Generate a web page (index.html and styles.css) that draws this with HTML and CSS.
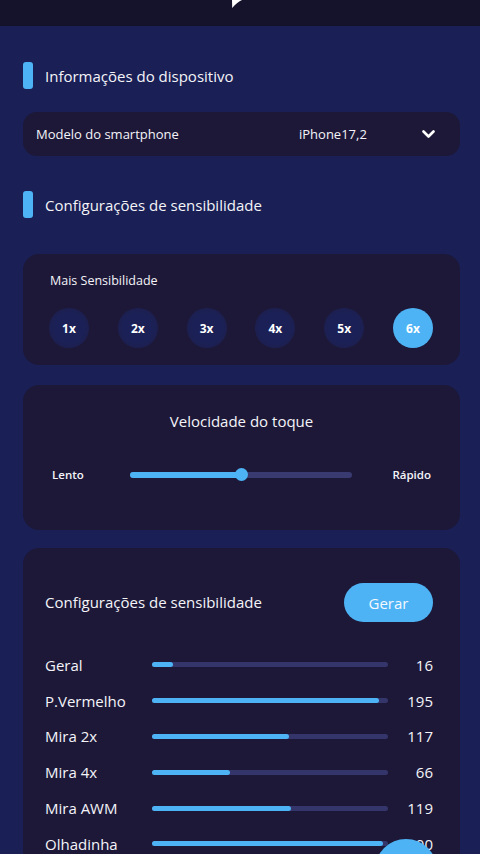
FILE: index.html
```html
<!DOCTYPE html>
<html lang="pt">
<head>
    <meta charset="UTF-8">
    <meta name="viewport" content="width=device-width, initial-scale=1.0">
    <title>Sensibilidade</title>
    <link rel="stylesheet" href="styles.css">
</head>
<body>
    <header class="top-bar">
        <svg class="logo" width="12" height="8" viewBox="0 0 12 8">
            <path d="M1 0 H11 C8 1.5 4.5 4 1.2 8 Z" fill="#fff"/>
        </svg>
    </header>
    <main>
        <div class="section-title">
            <span class="accent"></span>
            <h2>Informações do dispositivo</h2>
        </div>
        <div class="card device-select">
            <span class="device-label">Modelo do smartphone</span>
            <span class="device-value">iPhone17,2</span>
            <svg class="chevron" width="13" height="9" viewBox="0 0 13 9">
                <polyline points="1.5,1.5 6.5,6.5 11.5,1.5" fill="none" stroke="#fff" stroke-width="2.6" stroke-linecap="round" stroke-linejoin="round"/>
            </svg>
        </div>

        <div class="section-title second">
            <span class="accent"></span>
            <h2>Configurações de sensibilidade</h2>
        </div>
        <div class="card multiplier-card">
            <p class="card-label">Mais Sensibilidade</p>
            <div class="multipliers">
                <button class="mult">1x</button>
                <button class="mult">2x</button>
                <button class="mult">3x</button>
                <button class="mult">4x</button>
                <button class="mult">5x</button>
                <button class="mult active">6x</button>
            </div>
        </div>

        <div class="card speed-card">
            <h3 class="speed-title">Velocidade do toque</h3>
            <div class="speed-row">
                <span class="speed-label">Lento</span>
                <div class="slider">
                    <div class="slider-fill" style="width: 50%"></div>
                    <div class="slider-thumb" style="left: 50%"></div>
                </div>
                <span class="speed-label right">Rápido</span>
            </div>
        </div>

        <div class="card result-card">
            <div class="result-head">
                <h3>Configurações de sensibilidade</h3>
                <button class="btn-gerar">Gerar</button>
            </div>
            <div class="result-list">
                <div class="result-row">
                    <span class="result-name">Geral</span>
                    <div class="bar"><div class="bar-fill" style="width: 9%"></div></div>
                    <span class="result-value">16</span>
                </div>
                <div class="result-row">
                    <span class="result-name">P.Vermelho</span>
                    <div class="bar"><div class="bar-fill" style="width: 96%"></div></div>
                    <span class="result-value">195</span>
                </div>
                <div class="result-row">
                    <span class="result-name">Mira 2x</span>
                    <div class="bar"><div class="bar-fill" style="width: 58%"></div></div>
                    <span class="result-value">117</span>
                </div>
                <div class="result-row">
                    <span class="result-name">Mira 4x</span>
                    <div class="bar"><div class="bar-fill" style="width: 33%"></div></div>
                    <span class="result-value">66</span>
                </div>
                <div class="result-row">
                    <span class="result-name">Mira AWM</span>
                    <div class="bar"><div class="bar-fill" style="width: 59%"></div></div>
                    <span class="result-value">119</span>
                </div>
                <div class="result-row">
                    <span class="result-name">Olhadinha</span>
                    <div class="bar"><div class="bar-fill" style="width: 98%"></div></div>
                    <span class="result-value">200</span>
                </div>
            </div>
        </div>
    </main>
    <button class="fab"></button>
</body>
</html>
```

FILE: styles.css
```css
body {
    font-family: "Open Sans", Arial, sans-serif;
    margin: 0;
    padding: 0;
    background-color: #1a1f55;
    color: #f4f4f8;
    overflow: hidden;
}

.top-bar {
    height: 26px;
    background-color: #15132c;
    display: flex;
    justify-content: center;
    align-items: flex-start;
}

.logo {
    display: block;
    margin-right: 7px;
}

main {
    padding: 36px 20px 0 23px;
}

.section-title {
    display: flex;
    align-items: center;
    height: 27px;
}

.section-title.second {
    margin-top: 35px;
}

.accent {
    width: 10px;
    height: 27px;
    border-radius: 3px;
    background-color: #4db3f5;
}

.section-title h2 {
    margin: 0 0 0 12px;
    font-size: 15px;
    font-weight: 500;
}

.card {
    background-color: #1d1838;
    border-radius: 16px;
}

.device-select {
    margin-top: 23px;
    height: 44px;
    padding: 0 25px 0 13px;
    display: grid;
    grid-template-columns: 263px 123px 13px;
    align-items: center;
    font-size: 13px;
    font-weight: 500;
    border-radius: 14px;
}

.chevron {
    display: block;
}

.multiplier-card {
    margin-top: 36px;
    padding: 19px 27px 17px 26px;
}

.card-label {
    margin: 0 0 19px 1px;
    font-size: 12.5px;
    line-height: 16px;
    font-weight: 500;
}

.multipliers {
    display: flex;
    justify-content: space-between;
}

.mult {
    width: 40px;
    height: 40px;
    border: none;
    border-radius: 50%;
    padding: 0;
    background: radial-gradient(circle, #1b2157 50%, #1d1b45 100%);
    color: #fff;
    font-family: inherit;
    font-size: 12px;
    font-weight: 700;
}

.mult.active {
    background: #4db3f5;
}

.speed-card {
    margin-top: 20px;
    height: 145px;
    padding: 26px 29px 0;
    box-sizing: border-box;
}

.speed-title {
    margin: 0;
    text-align: center;
    font-size: 15px;
    line-height: 20px;
    font-weight: 500;
}

.speed-row {
    margin-top: 36px;
    display: grid;
    grid-template-columns: 78px 222px 1fr;
    align-items: center;
    font-size: 11.5px;
    font-weight: 600;
}

.speed-label.right {
    text-align: right;
}

.slider {
    position: relative;
    height: 6px;
    border-radius: 3px;
    background-color: #393a70;
}

.slider-fill {
    height: 100%;
    border-radius: 3px;
    background-color: #4db3f5;
}

.slider-thumb {
    position: absolute;
    top: -3.5px;
    width: 13px;
    height: 13px;
    margin-left: -6.5px;
    border-radius: 50%;
    background-color: #4db3f5;
}

.result-card {
    margin-top: 18px;
    padding: 35px 27px 40px 22px;
}

.result-head {
    display: flex;
    justify-content: space-between;
    align-items: center;
}

.result-head h3 {
    margin: 0 0 2px;
    font-size: 15px;
    font-weight: 500;
}

.btn-gerar {
    width: 89px;
    height: 39px;
    border: none;
    border-radius: 20px;
    background-color: #4db3f5;
    color: #f4f8ff;
    font-family: inherit;
    font-size: 15px;
    font-weight: 500;
}

.result-list {
    margin-top: 25px;
}

.result-row {
    height: 35.8px;
    display: grid;
    grid-template-columns: 107px 236px 1fr;
    align-items: center;
    font-size: 15px;
    font-weight: 500;
}

.result-value {
    text-align: right;
}

.bar {
    height: 5px;
    border-radius: 3px;
    background-color: #34356a;
}

.bar-fill {
    height: 100%;
    border-radius: 3px;
    background-color: #4db3f5;
}

.fab {
    position: fixed;
    left: 375px;
    top: 839px;
    width: 62px;
    height: 62px;
    border: none;
    border-radius: 50%;
    background-color: #4db3f5;
}
```
